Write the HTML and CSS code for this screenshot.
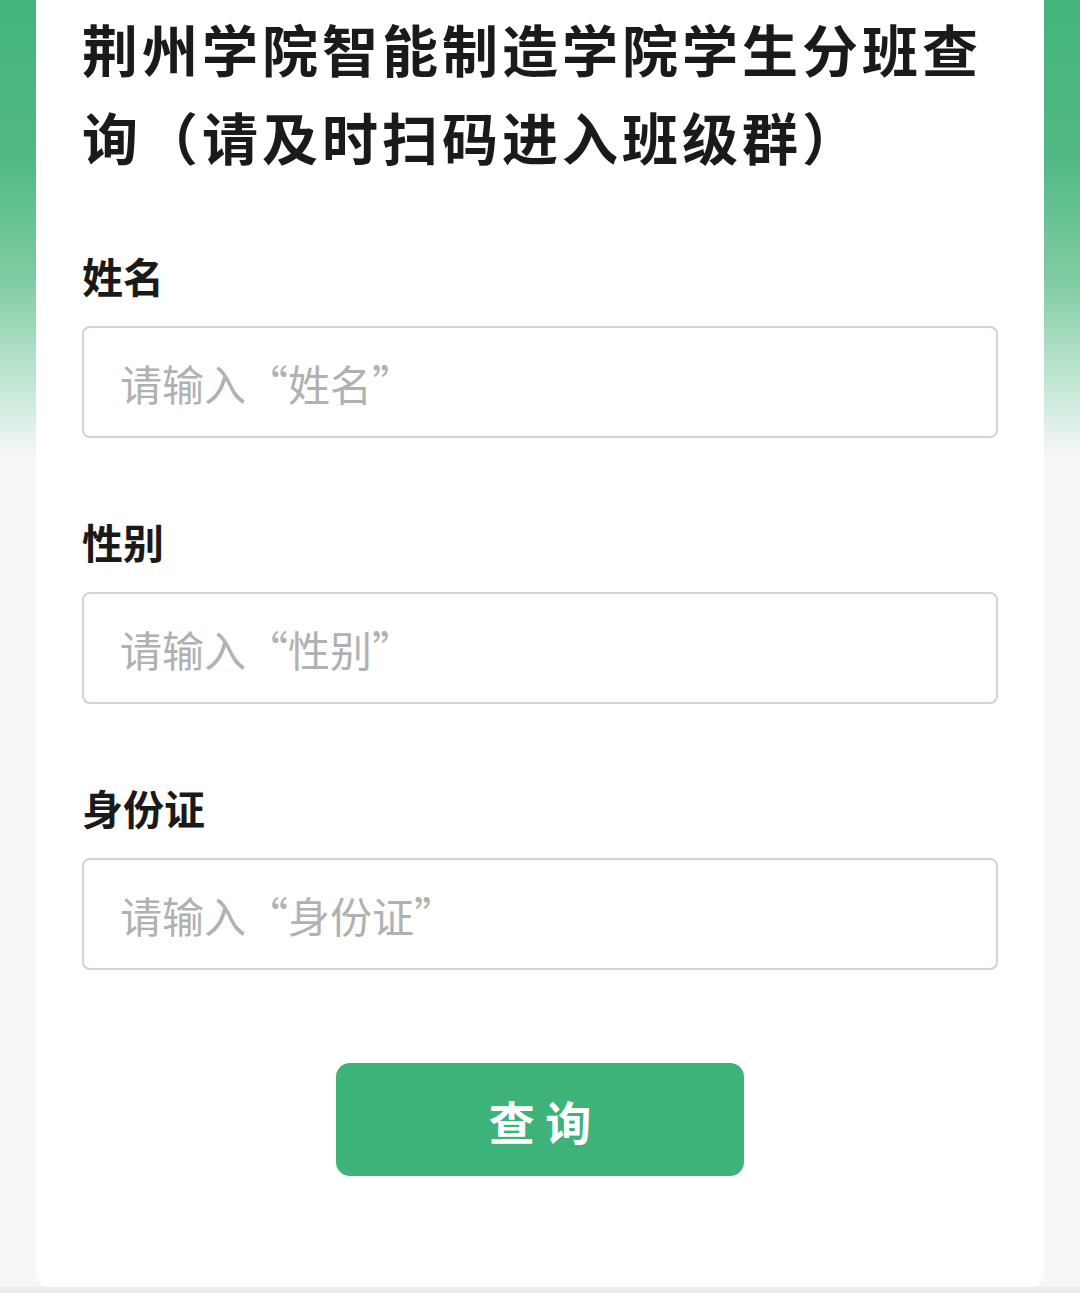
FILE: index.html
```html
<!DOCTYPE html>
<html lang="zh-CN">
<head>
    <meta charset="UTF-8">
    <meta name="viewport" content="width=device-width, initial-scale=1.0">
    <title>分班查询</title>
    <link rel="stylesheet" href="styles.css">
</head>
<body>
    <div class="page">
        <div class="card">
            <h1 class="title">荆州学院智能制造学院学生分班查询（请及时扫码进入班级群）</h1>
            <form class="query-form" onsubmit="return false">
                <div class="field">
                    <label for="name">姓名</label>
                    <input type="text" id="name" placeholder="请输入“姓名”">
                </div>
                <div class="field">
                    <label for="gender">性别</label>
                    <input type="text" id="gender" placeholder="请输入“性别”">
                </div>
                <div class="field">
                    <label for="idcard">身份证</label>
                    <input type="text" id="idcard" placeholder="请输入“身份证”">
                </div>
                <div class="actions">
                    <button type="submit">查 询</button>
                </div>
            </form>
        </div>
    </div>
    <div class="bottom-bar"></div>
</body>
</html>
```

FILE: styles.css
```css
html, body {
    margin: 0;
    padding: 0;
}
body {
    font-family: "Noto Sans CJK SC", "Noto Sans", sans-serif;
    background: linear-gradient(to bottom, #44b47c 0px, #52b985 160px, #7fcca3 280px, #c0e6d2 380px, #f5f6f8 455px, #f5f6f8 100%);
    color: #1a1a1a;
    width: 1080px;
    height: 1293px;
    overflow: hidden;
}
.page {
    padding: 0 36px;
}
.card {
    background: #fff;
    height: 1287px;
    box-sizing: border-box;
    padding: 4px 46px 0;
    border-radius: 0 0 14px 14px;
}
.title {
    margin: 0;
    font-size: 56px;
    line-height: 88px;
    font-weight: 700;
    color: #1a1a1a;
    letter-spacing: 4px;
}
.query-form {
    padding-top: 67px;
}
.field {
    margin-bottom: 75px;
}
.field label {
    display: block;
    font-size: 41px;
    line-height: 56px;
    font-weight: 700;
    color: #1a1a1a;
    margin-bottom: 23px;
}
.field input {
    display: block;
    width: 100%;
    height: 112px;
    box-sizing: border-box;
    border: 2px solid #d2d2d2;
    border-radius: 8px;
    padding: 0 36px;
    font-family: inherit;
    font-size: 42px;
    color: #333;
    background: #fff;
    outline: none;
}
.field input::placeholder {
    color: #b1b1b1;
}
.actions {
    display: flex;
    justify-content: center;
    margin-top: 93px;
}
.actions button {
    width: 408px;
    height: 113px;
    border: none;
    border-radius: 14px;
    background: #3db37a;
    color: #fff;
    font-family: inherit;
    font-size: 46px;
    font-weight: 700;
    cursor: pointer;
}
.bottom-bar {
    height: 6px;
    background: #ededed;
}
```
